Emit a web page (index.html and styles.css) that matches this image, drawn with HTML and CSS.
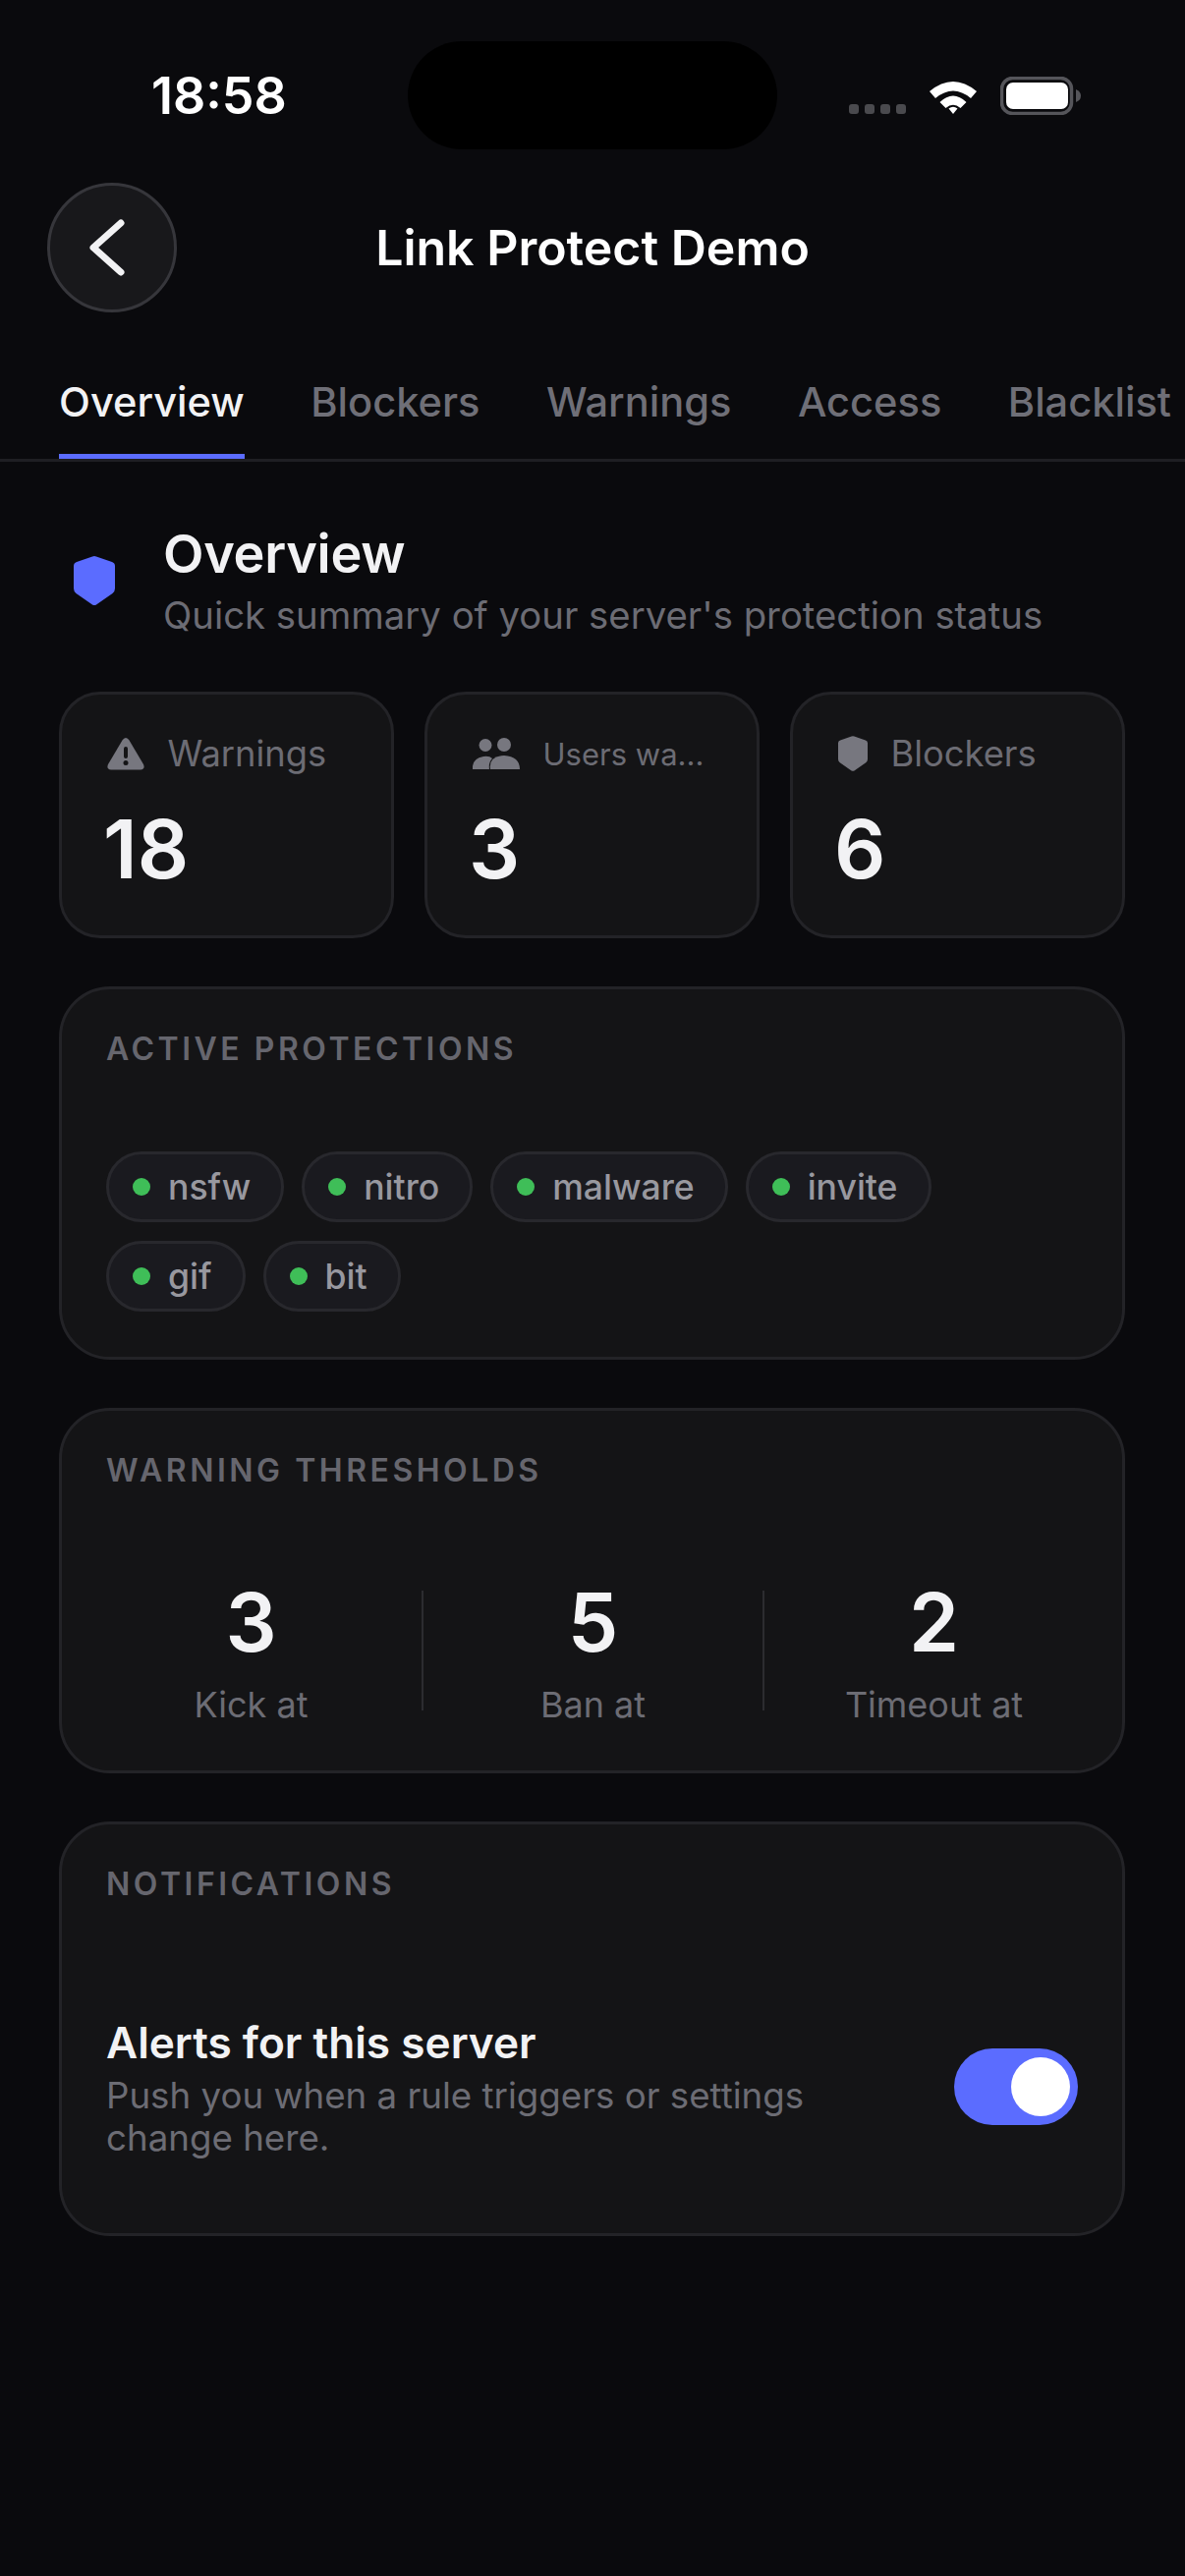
FILE: index.html
```html
<!DOCTYPE html>
<html lang="en">
<head>
  <meta charset="UTF-8" />
  <meta name="viewport" content="width=device-width, initial-scale=1.0"/>
  <title>Link Protect Demo</title>
  <link rel="stylesheet" href="styles.css">
</head>
<body>

  <div class="island"></div>

  <div class="status-bar">
    <span class="time">18:58</span>
    <div class="status-icons">
      <div class="signal"><i></i><i></i><i></i><i></i></div>
      <svg class="wifi" width="50" height="38" viewBox="0 0 50 38">
        <path d="M1 14 Q25 -6 49 14 L43 21 Q25 6 7 21 Z" fill="#fff"/>
        <path d="M11.500 25 Q25 12 38.500 25 L32.500 31 Q25 24.500 17.500 31 Z" fill="#fff"/>
        <path d="M20.500 31.500 Q25 28 29.500 31.500 L25 37 Z" fill="#fff"/>
      </svg>
      <svg class="battery" width="82" height="39" viewBox="0 0 82 39">
        <rect x="1.500" y="1.500" width="71" height="36" rx="11" fill="none" stroke="#55555a" stroke-width="3.500"/>
        <rect x="6" y="6" width="63" height="27" rx="7" fill="#fff"/>
        <path d="M77 13 Q82 15 82 19.500 Q82 24 77 26 Z" fill="#55555a"/>
      </svg>
    </div>
  </div>

  <header class="nav">
    <button class="back">
      <svg width="44" height="64" viewBox="0 0 44 64">
        <path d="M34 7 L6 32 L34 57" fill="none" stroke="#f2f2f4" stroke-width="7" stroke-linecap="round" stroke-linejoin="round"/>
      </svg>
    </button>
    <h1>Link Protect Demo</h1>
  </header>

  <nav class="tabs">
    <a class="tab active">Overview</a>
    <a class="tab">Blockers</a>
    <a class="tab">Warnings</a>
    <a class="tab">Access</a>
    <a class="tab">Blacklist</a>
  </nav>

  <main class="content">
    <section class="heading">
      <svg class="heading-icon" width="42" height="50" viewBox="0 0 42 50">
        <path d="M21 0 Q22 0 23 .4 L39 6 Q42 7 42 10 V33 Q42 36 39.500 38 L23 49.500 Q21 50.500 19 49.500 L2.500 38 Q0 36 0 33 V10 Q0 7 3 6 L19 .4 Q20 0 21 0 Z" fill="#5b6cff"/>
      </svg>
      <div>
        <h2>Overview</h2>
        <p>Quick summary of your server's protection status</p>
      </div>
    </section>

    <section class="stats">
      <div class="stat">
        <div class="stat-label">
          <svg width="38" height="34" viewBox="0 0 38 34">
            <path d="M19 1 Q21 1 22.500 3.500 L37 28 Q39 33 34 33.500 H4 Q-1 33 1 28 L15.500 3.500 Q17 1 19 1 Z" fill="#77777f"/>
            <rect x="17" y="10" width="4" height="12" rx="2" fill="#141416"/>
            <circle cx="19" cy="26.500" r="2.500" fill="#141416"/>
          </svg>
          <span>Warnings</span>
        </div>
        <div class="stat-value">18</div>
      </div>
      <div class="stat">
        <div class="stat-label">
          <svg width="48" height="32" viewBox="0 0 48 32">
            <circle cx="13" cy="7.500" r="6.500" fill="#77777f"/>
            <circle cx="32" cy="7" r="7" fill="#77777f"/>
            <path d="M0 32 Q-1 21 11 19 Q17 18 20 21 Q16 25 17 32 Z" fill="#77777f"/>
            <path d="M18 32 Q16 19 32 18 Q48 19 48 32 Z" fill="#77777f"/>
          </svg>
          <span class="small">Users wa...</span>
        </div>
        <div class="stat-value">3</div>
      </div>
      <div class="stat">
        <div class="stat-label">
          <svg width="30" height="36" viewBox="0 0 42 50">
            <path d="M21 0 Q22 0 23 .4 L39 6 Q42 7 42 10 V33 Q42 36 39.500 38 L23 49.500 Q21 50.500 19 49.500 L2.500 38 Q0 36 0 33 V10 Q0 7 3 6 L19 .4 Q20 0 21 0 Z" fill="#77777f"/>
          </svg>
          <span>Blockers</span>
        </div>
        <div class="stat-value">6</div>
      </div>
    </section>

    <section class="card protections">
      <h3>Active protections</h3>
      <div class="chips">
        <span class="chip"><i></i>nsfw</span>
        <span class="chip"><i></i>nitro</span>
        <span class="chip"><i></i>malware</span>
        <span class="chip"><i></i>invite</span>
        <span class="chip"><i></i>gif</span>
        <span class="chip"><i></i>bit</span>
      </div>
    </section>

    <section class="card thresholds">
      <h3>Warning thresholds</h3>
      <div class="limits">
        <div class="limit"><b>3</b><span>Kick at</span></div>
        <div class="limit"><b>5</b><span>Ban at</span></div>
        <div class="limit"><b>2</b><span>Timeout at</span></div>
      </div>
    </section>

    <section class="card notifications">
      <h3>Notifications</h3>
      <div class="alert-row">
        <div class="alert-text">
          <strong>Alerts for this server</strong>
          <p>Push you when a rule triggers or settings change here.</p>
        </div>
        <div class="toggle"><div class="knob"></div></div>
      </div>
    </section>
  </main>

</body>
</html>
```

FILE: styles.css
```css
* {
  box-sizing: border-box;
}

html, body {
  margin: 0;
  height: 2622px;
  overflow: hidden;
}

body {
  font-family: Inter, 'Noto Sans', sans-serif;
  background: #0a0a0d;
  color: #f2f2f4;
  position: relative;
}

.island {
  position: absolute;
  left: 415px;
  top: 42px;
  width: 376px;
  height: 110px;
  border-radius: 55px;
  background: #000;
}

.status-bar {
  height: 186px;
  padding: 65px 106px 0 154px;
  display: flex;
  justify-content: space-between;
  align-items: flex-start;
}

.time {
  font-size: 52px;
  line-height: 66px;
  font-weight: 600;
  color: #fff;
}

.status-icons {
  display: flex;
  align-items: center;
  gap: 23px;
  padding-top: 13px;
}

.signal {
  display: flex;
  gap: 6px;
  padding-top: 26px;
}

.signal i {
  width: 10px;
  height: 10px;
  border-radius: 3px;
  background: #4a4a4e;
}

.nav {
  height: 132px;
  padding-left: 48px;
  display: flex;
  align-items: center;
  position: relative;
}

.back {
  width: 132px;
  height: 132px;
  border-radius: 50%;
  border: 3px solid #36363b;
  background: #18181b;
  display: flex;
  align-items: center;
  justify-content: center;
  padding: 0 6px 0 0;
}

.nav h1 {
  position: absolute;
  left: 0;
  right: 0;
  margin: 0;
  text-align: center;
  font-size: 50px;
  font-weight: 600;
  color: #fff;
}

.tabs {
  margin-top: 37px;
  height: 115px;
  padding-left: 60px;
  display: flex;
  gap: 67.500px;
  border-bottom: 3px solid #1f1f23;
  white-space: nowrap;
  overflow: hidden;
}

.tab {
  height: 113px;
  padding-top: 29px;
  font-size: 41.600px;
  line-height: 50px;
  font-weight: 500;
  color: #6f6f77;
}

.tab.active {
  color: #f2f2f4;
  border-bottom: 6px solid #5b6cff;
}

.content {
  padding: 60px 61px 0 60px;
}

.heading {
  display: flex;
  align-items: center;
  gap: 49px;
  padding-left: 15px;
}

.heading-icon {
  margin-top: 2px;
}

.heading h2 {
  margin: 0;
  font-size: 54px;
  line-height: 68px;
  font-weight: 600;
  letter-spacing: -0.300px;
}

.heading p {
  margin: 4px 0 0;
  font-size: 38.300px;
  line-height: 48px;
  color: #6c6c74;
}

.stats {
  margin-top: 54px;
  display: grid;
  grid-template-columns: repeat(3, 1fr);
  gap: 31px;
}

.stat, .card {
  background: #141416;
  border: 3px solid #232327;
}

.stat {
  height: 251px;
  border-radius: 42px;
  padding: 38px 0 0 43px;
}

.stat-label {
  display: flex;
  align-items: center;
  gap: 23.500px;
  height: 44px;
  font-size: 36.300px;
  color: #6c6c74;
}

.stat-label svg {
  margin-left: 3px;
}

.stat-label .small {
  font-size: 31px;
}

.stat-value {
  margin-top: 28px;
  margin-left: -1px;
  font-size: 82px;
  line-height: 96px;
  font-weight: 600;
}

.card {
  margin-top: 49px;
  border-radius: 52px;
  padding: 42px 45px;
}

.card h3 {
  margin: 0;
  font-size: 32px;
  line-height: 38px;
  font-weight: 600;
  letter-spacing: 3.500px;
  text-transform: uppercase;
  color: #66666e;
}

.protections {
  height: 380px;
}

.chips {
  margin-top: 85px;
  display: flex;
  flex-wrap: wrap;
  gap: 19px 18px;
}

.chip {
  height: 72px;
  padding: 0 31px 0 24px;
  display: flex;
  align-items: center;
  gap: 18px;
  border-radius: 36px;
  border: 3px solid #28282d;
  background: #1a1a1f;
  font-size: 35.600px;
  font-weight: 500;
  color: #98989f;
}

.chip i {
  width: 18px;
  height: 18px;
  border-radius: 50%;
  background: #3fbe58;
}

.thresholds {
  height: 372px;
}

.limits {
  margin: 103px -26px 0;
  display: grid;
  grid-template-columns: repeat(3, 1fr);
}

.limit {
  height: 122px;
  display: flex;
  flex-direction: column;
  align-items: center;
  border-left: 2px solid #2c2c30;
}

.limit:first-child {
  border-left: none;
}

.limit b {
  margin-top: -17px;
  font-size: 82px;
  line-height: 100px;
  font-weight: 600;
}

.limit span {
  margin-top: 10px;
  font-size: 36px;
  line-height: 46px;
  color: #6c6c74;
}

.notifications {
  height: 422px;
}

.alert-row {
  margin-top: 112px;
  display: flex;
  align-items: center;
  justify-content: space-between;
}

.alert-text {
  width: 740px;
}

.alert-text strong {
  display: block;
  font-size: 44.200px;
  line-height: 60px;
  font-weight: 600;
}

.alert-text p {
  margin: 3px 0 0;
  font-size: 36.700px;
  line-height: 42.500px;
  color: #6c6c74;
}

.toggle {
  width: 126px;
  height: 78px;
  margin-top: 1px;
  padding: 9px 8px 0 0;
  border-radius: 39px;
  background: #5b6cff;
  display: flex;
  justify-content: flex-end;
}

.knob {
  width: 60px;
  height: 60px;
  border-radius: 50%;
  background: #fff;
}
```
